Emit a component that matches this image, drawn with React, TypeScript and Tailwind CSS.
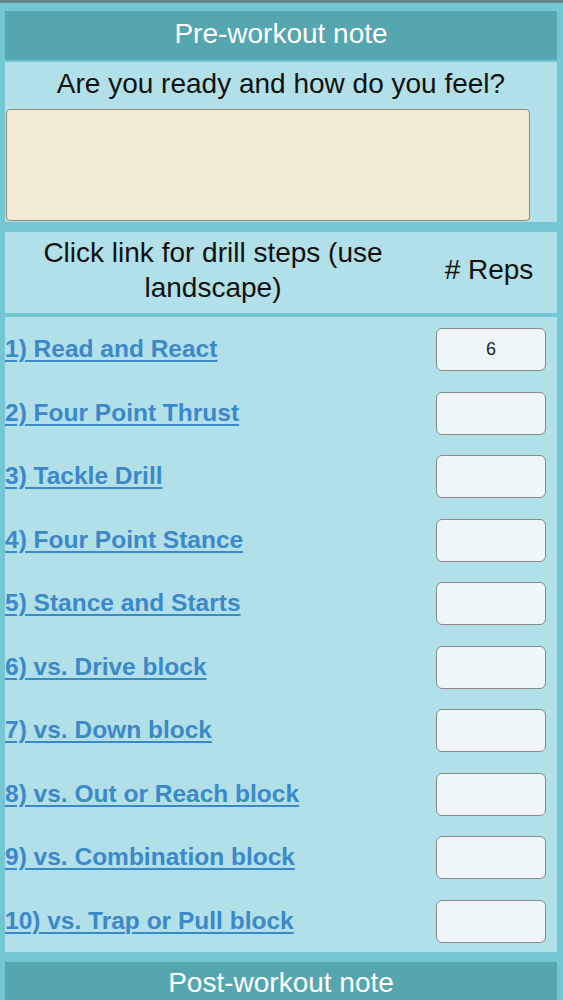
import React, { useState } from "react";

const drills = [
    "1) Read and React",
    "2) Four Point Thrust",
    "3) Tackle Drill",
    "4) Four Point Stance",
    "5) Stance and Starts",
    "6) vs. Drive block",
    "7) vs. Down block",
    "8) vs. Out or Reach block",
    "9) vs. Combination block",
    "10) vs. Trap or Pull block",
];

const App: React.FC = () => {
    const [reps, setReps] = useState<string[]>(["6", "", "", "", "", "", "", "", "", ""]);
    const [note, setNote] = useState("");

    const handleRep = (i: number, value: string) => {
        setReps((prev) => prev.map((r, idx) => (idx === i ? value : r)));
    };

    return (
        <div className="w-[563px] h-[1000px] overflow-hidden bg-[#74c6d2] flex flex-col border-t-[3px] border-[#62888a] font-['Liberation_Sans',Arial,sans-serif]">
            <div className="flex-1 flex flex-col pl-[5px] pr-[6px]">
                {/* Pre-workout header */}
                <div className="mt-[8px] h-[49px] bg-[#55a6ae] flex items-center justify-center text-white text-[28px] pb-[4px]">
                    Pre-workout note
                </div>

                {/* Note panel */}
                <div className="mt-[2px] h-[160px] bg-[#b1e0e8] flex flex-col">
                    <div className="h-[47px] flex items-center justify-center text-[28px] text-[#111] pb-[3px]">
                        Are you ready and how do you feel?
                    </div>
                    <textarea
                        value={note}
                        onChange={(e) => setNote(e.target.value)}
                        className="ml-[1px] w-[524px] h-[112px] resize-none bg-[#f3ebd6] border border-[#8c8c7c] rounded-[4px] outline-none p-2 text-lg"
                    />
                </div>

                {/* Column headings */}
                <div className="mt-[10px] h-[81px] bg-[#b1e0e8] flex items-center text-[28px] text-[#111] leading-[35px] pb-[6px]">
                    <div className="w-[416px] text-center">
                        Click link for drill steps (use
                        <br />
                        landscape)
                    </div>
                    <div className="flex-1 text-center">{"# Reps"}</div>
                </div>

                {/* Drill list */}
                <div className="mt-[4px] bg-[#b1e0e8] flex flex-col">
                    {drills.map((d, i) => (
                        <div key={d} className="h-[63.5px] flex items-center justify-between pr-[11px] pt-[2px]">
                            <a
                                href="#"
                                onClick={(e) => e.preventDefault()}
                                className="text-[24.5px] font-bold text-[#3c88c9] underline underline-offset-[3px] decoration-2"
                            >
                                {d}
                            </a>
                            <input
                                type="text"
                                value={reps[i]}
                                onChange={(e) => handleRep(i, e.target.value)}
                                className="w-[110px] h-[43px] bg-[#eef6fa] border-[1.5px] border-[#8a8a8a] rounded-[6px] text-center text-[18px] text-[#222] outline-none"
                            />
                        </div>
                    ))}
                </div>

                {/* Post-workout header */}
                <div className="mt-[10px] flex-1 bg-[#55a6ae] flex items-start justify-center text-white text-[28px]">
                    Post-workout note
                </div>
            </div>
            <div className="h-[3px] bg-[#111]" />
        </div>
    );
};

export default App;
